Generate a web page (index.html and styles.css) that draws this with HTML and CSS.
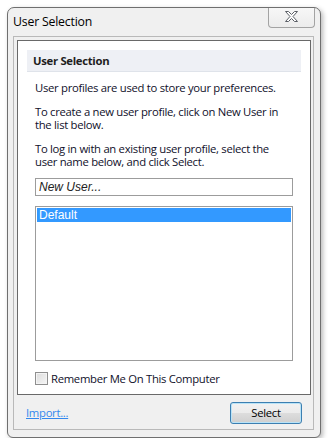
FILE: index.html
```html
<!DOCTYPE html>
<html>
<head>
<meta charset="utf-8">
<link rel="stylesheet" href="styles.css">
</head>
<body>
<div class="window">
  <div class="titlebar">
    <span class="title">User Selection</span>
    <div class="close">
      <svg width="13" height="11" viewBox="0 0 13 11">
        <polygon points="0.5,0.5 3.5,0.5 6.5,3.5 9.5,0.5 12.5,0.5 8,5.5 12.5,10.5 9.5,10.5 6.5,7.5 3.5,10.5 0.5,10.5 5,5.5" fill="#fdfdfd" stroke="#5b5f66" stroke-width="1" stroke-linejoin="round"/>
      </svg>
    </div>
  </div>
  <div class="client">
    <div class="frame">
      <div class="band">User Selection</div>
      <div class="content">
        <p>User profiles are used to store your preferences.</p>
        <p>To create a new user profile, click on New User in the list below.</p>
        <p>To log in with an existing user profile, select the user name below, and click Select.</p>
        <div class="input">New User...</div>
        <div class="list">
          <div class="item selected">Default</div>
        </div>
        <label class="check"><span class="box"></span><span>Remember Me On This Computer</span></label>
      </div>
    </div>
    <div class="bottombar">
      <a class="link" href="#">Import...</a>
      <div class="button">Select</div>
    </div>
  </div>
</div>
</body>
</html>
```
FILE: styles.css
```css
html, body {
  margin: 0;
  padding: 0;
  background: #ffffff;
}
body {
  font-family: "Open Sans", "Noto Sans", sans-serif;
  font-size: 11.3px;
  letter-spacing: -0.3px;
  color: #1a1a1a;
}
.window {
  box-sizing: border-box;
  margin: 7px 0 0 7px;
  width: 314px;
  height: 431px;
  border: 1px solid #6f6f6f;
  border-radius: 7px 7px 6px 6px;
  background: #f0f0f0;
  box-shadow: 2px 2px 5px rgba(0,0,0,0.28);
  padding: 0 6px 7px 5px;
  display: flex;
  flex-direction: column;
  overflow: hidden;
}
.titlebar {
  height: 28px;
  display: flex;
  align-items: center;
  justify-content: space-between;
  flex: none;
}
.title {
  font-size: 12.3px;
  letter-spacing: -0.2px;
  color: #000;
  margin-top: -1px;
}
.close {
  align-self: flex-start;
  box-sizing: border-box;
  width: 47px;
  height: 20px;
  margin-right: -1px;
  border: 1px solid #a3a3a3;
  border-top: none;
  border-radius: 0 0 4px 4px;
  background: linear-gradient(#f7f7f7, #ececec);
  display: flex;
  align-items: center;
  justify-content: center;
  padding-bottom: 3px;
}
.close svg {
  display: block;
}
.client {
  flex: 1;
  min-height: 0;
  box-sizing: border-box;
  border: 1px solid #b9b9b9;
  background: #f0f0f0;
  padding: 3px 2px 0 3px;
  display: flex;
  flex-direction: column;
}
.frame {
  flex: 1;
  min-height: 0;
  border: 1px solid #696969;
  background: #ffffff;
  padding: 9px;
  display: flex;
  flex-direction: column;
}
.band {
  flex: none;
  height: 21px;
  line-height: 21px;
  background: #eef0f5;
  border-bottom: 1px solid #dfe3ea;
  font-weight: bold;
  color: #1e1e1e;
  padding-left: 6px;
}
.content {
  flex: 1;
  min-height: 0;
  padding: 9px 8px 0 8px;
  display: flex;
  flex-direction: column;
}
.content p {
  margin: 0 0 11px 0;
  line-height: 13px;
  color: #10102a;
}
.input {
  flex: none;
  box-sizing: border-box;
  height: 18px;
  margin-top: -1px;
  border: 1px solid #9c9c9c;
  font-family: "Liberation Sans", Arial, sans-serif;
  font-style: italic;
  font-size: 12px;
  letter-spacing: 0;
  line-height: 16px;
  padding-left: 3px;
  color: #222;
}
.list {
  flex: 1;
  min-height: 0;
  box-sizing: border-box;
  margin-top: 10px;
  border: 1px solid #9c9c9c;
  padding: 1px;
}
.item {
  height: 14px;
  line-height: 14px;
  font-family: "Liberation Sans", Arial, sans-serif;
  font-size: 12px;
  letter-spacing: 0;
  padding-left: 2px;
}
.item.selected {
  background: #3399ff;
  color: #ffffff;
}
.check {
  flex: none;
  margin-top: 11px;
  margin-bottom: 0;
  display: flex;
  align-items: center;
  gap: 3px;
  color: #10102a;
  line-height: 13px;
}
.box {
  box-sizing: border-box;
  width: 13px;
  height: 13px;
  border: 1px solid #8f8f8f;
  background: linear-gradient(135deg, #dcdcdc, #f6f6f6);
  box-shadow: inset 0 0 0 1px #f4f4f4;
  flex: none;
}
.bottombar {
  height: 34px;
  flex: none;
  display: flex;
  align-items: flex-start;
  justify-content: space-between;
  padding: 7px 9px 0 9px;
  box-sizing: border-box;
}
.link {
  color: #3388ee;
  text-decoration: underline;
  margin-top: 3px;
}
.button {
  box-sizing: border-box;
  width: 72px;
  height: 22px;
  border: 1px solid #3c7fb1;
  border-radius: 3px;
  background: linear-gradient(#f2f2f2 0%, #ebebeb 50%, #dddddd 50%, #cfcfcf 100%);
  box-shadow: inset 0 0 0 1px #b9e3f7;
  text-align: center;
  line-height: 19px;
  color: #000;
}
```
